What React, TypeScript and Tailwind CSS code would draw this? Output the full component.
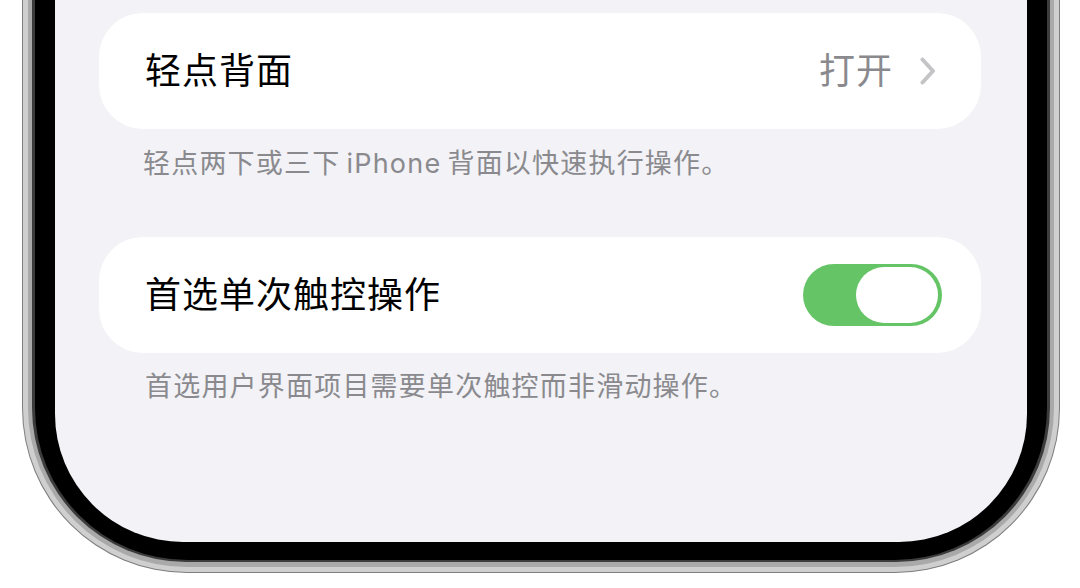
const font = { fontFamily: 'Inter, "Noto Sans CJK SC", sans-serif' };

function Chevron() {
  return (
    <svg width="16" height="28" viewBox="0 0 16 28" fill="none">
      <polyline
        points="2.5,2.5 13,14 2.5,25.5"
        stroke="#c4c4c7"
        strokeWidth="4"
        strokeLinecap="round"
        strokeLinejoin="round"
      />
    </svg>
  );
}

function Toggle() {
  return (
    <div className="flex w-[139px] h-[62px] items-center justify-end rounded-full bg-[#65c466] pr-[4px]">
      <div className="w-[82px] h-[56px] rounded-full bg-white" />
    </div>
  );
}

export default function App() {
  return (
    <div className="min-h-screen bg-white" style={font}>
      {/* phone frame: silver band, then black bezel */}
      <div className="ml-[22px] w-[1038px] h-[573px] rounded-b-[165px] bg-[#7d7d7d] px-[1px] pb-[1px]">
        <div className="h-full rounded-b-[164px] bg-[#cfcfcf] px-[5px] pb-[5px]">
          <div className="h-full rounded-b-[159px] bg-[#a9a9a9] px-[4px] pb-[5px]">
            <div className="h-full rounded-b-[154px] bg-[#3c3c3c] px-[3px] pb-[2px]">
              <div className="h-full rounded-b-[152px] bg-black px-[20px] pb-[18px]">
                <div className="h-full rounded-b-[128px] bg-[#f2f2f7] pl-[44px] pr-[46px] pt-[13px] flex flex-col">
                  <div className="flex h-[116px] items-center justify-between rounded-[44px] bg-white pl-[46px] pr-[45px]">
                    <span className="text-[36px] leading-none tracking-[1px] text-black">轻点背面</span>
                    <div className="flex items-center gap-[27px]">
                      <span className="text-[36px] leading-none tracking-[1px] text-[#8a8a8e]">打开</span>
                      <Chevron />
                    </div>
                  </div>
                  <p className="mt-[17px] px-[44px] text-[27px] leading-[36px] tracking-[1.2px] text-[#8a8a8e]">
                    轻点两下或三下{'\u2009'}iPhone{'\u2009'}背面以快速执行操作。
                  </p>
                  <div className="mt-[55px] flex h-[116px] items-center justify-between rounded-[44px] bg-white pl-[46px] pr-[39px]">
                    <span className="text-[36px] leading-none tracking-[1px] text-black">首选单次触控操作</span>
                    <Toggle />
                  </div>
                  <p className="mt-[16px] px-[46px] text-[27px] leading-[36px] tracking-[1.2px] text-[#8a8a8e]">
                    首选用户界面项目需要单次触控而非滑动操作。
                  </p>
                </div>
              </div>
            </div>
          </div>
        </div>
      </div>
    </div>
  );
}
